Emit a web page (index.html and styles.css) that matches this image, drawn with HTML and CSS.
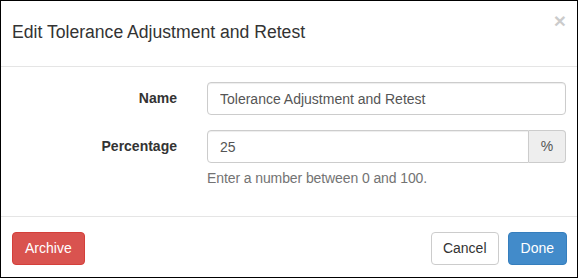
FILE: index.html
```html
<!DOCTYPE html>
<html>
<head>
<meta charset="utf-8">
<link rel="stylesheet" href="styles.css">
</head>
<body>
<div class="modal">
  <div class="modal-header">
    <h4 class="modal-title">Edit Tolerance Adjustment and Retest</h4>
    <button class="close" type="button">&times;</button>
  </div>
  <div class="modal-body">
    <div class="form-row">
      <label class="form-label">Name</label>
      <div class="form-field">
        <input class="form-control" type="text" value="Tolerance Adjustment and Retest">
      </div>
    </div>
    <div class="form-row">
      <label class="form-label">Percentage</label>
      <div class="form-field">
        <div class="input-group">
          <input class="form-control group-input" type="text" value="25">
          <span class="addon">%</span>
        </div>
        <p class="help">Enter a number between 0 and 100.</p>
      </div>
    </div>
  </div>
  <div class="modal-footer">
    <button class="btn btn-danger" type="button">Archive</button>
    <div class="footer-right">
      <button class="btn btn-default" type="button">Cancel</button>
      <button class="btn btn-primary" type="button">Done</button>
    </div>
  </div>
</div>
</body>
</html>
```

FILE: styles.css
```css
* { box-sizing: border-box; }
html, body { margin: 0; padding: 0; background: #fff; }
body {
  font-family: "Liberation Sans", Arial, sans-serif;
  font-size: 14px;
  color: #333;
}
.modal {
  width: 578px;
  height: 278px;
  border: 1px solid #000;
  display: flex;
  flex-direction: column;
}
.modal-header {
  display: flex;
  justify-content: space-between;
  align-items: flex-start;
  padding: 18px 11px 21px 11px;
  border-bottom: 1px solid #e5e5e5;
}
.modal-title {
  margin: 0;
  font-size: 17.6px;
  font-weight: normal;
  line-height: 26px;
  color: #333;
}
.close {
  margin: -9px 0 0 0;
  padding: 0;
  border: 0;
  background: transparent;
  font-family: "Liberation Sans", Arial, sans-serif;
  font-size: 21px;
  font-weight: bold;
  line-height: 1;
  color: #000;
  opacity: 0.2;
}
.modal-body {
  padding: 15px 11px 28px 11px;
  display: flex;
  flex-direction: column;
  gap: 15px;
}
.form-row {
  display: grid;
  grid-template-columns: 165px 1fr;
  column-gap: 30px;
}
.form-label {
  font-weight: bold;
  text-align: right;
  line-height: 33px;
}
.form-control {
  display: block;
  width: 100%;
  height: 33px;
  padding: 6px 12px;
  font-family: "Liberation Sans", Arial, sans-serif;
  font-size: 14px;
  line-height: 19px;
  color: #555;
  background: #fff;
  border: 1px solid #ccc;
  border-radius: 4px;
  box-shadow: inset 0 1px 1px rgba(0,0,0,.075);
}
.input-group { display: flex; }
.group-input {
  flex: 1;
  border-radius: 4px 0 0 4px;
}
.addon {
  width: 37px;
  height: 33px;
  line-height: 31px;
  text-align: center;
  color: #555;
  background: #eee;
  border: 1px solid #ccc;
  border-left: 0;
  border-radius: 0 4px 4px 0;
}
.help {
  margin: 5px 0 0 0;
  line-height: 20px;
  color: #737373;
  letter-spacing: -0.1px;
}
.modal-footer {
  flex: 1;
  display: flex;
  justify-content: space-between;
  align-items: flex-start;
  padding: 15px 10px 0 11px;
  border-top: 1px solid #e5e5e5;
}
.footer-right { display: flex; gap: 9px; }
.btn {
  height: 33px;
  padding: 6px 12px;
  font-family: "Liberation Sans", Arial, sans-serif;
  font-size: 14px;
  line-height: 19px;
  border: 1px solid transparent;
  border-radius: 4px;
}
.btn-default { padding: 6px 11px; }
.btn-danger { background: #d9534f; border-color: #d43f3a; color: #fff; }
.btn-default { background: #fff; border-color: #ccc; color: #333; }
.btn-primary { background: #428bca; border-color: #357ebd; color: #fff; }
```
